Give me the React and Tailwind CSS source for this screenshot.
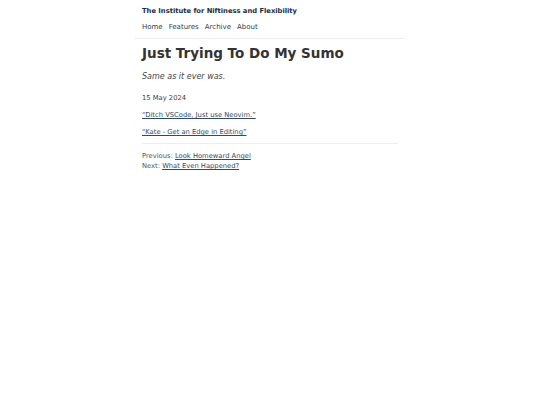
export default function App() {
  return (
    <div
      className="min-h-screen bg-white text-[#333]"
      style={{ fontFamily: '"DejaVu Sans", sans-serif' }}
    >
      <div className="mx-auto w-[270px] pt-[6px]">
        <header className="border-b border-[#eee] px-[7px] pb-[6px]">
          <a href="#" className="block text-[6.75px] font-bold leading-[10px] text-[#1c2b44]">
            The Institute for Niftiness and Flexibility
          </a>
          <nav className="mt-[6px] flex gap-[6px] text-[7px] leading-[10px] text-[#2c3e5a]">
            <a href="#">Home</a>
            <a href="#">Features</a>
            <a href="#">Archive</a>
            <a href="#">About</a>
          </nav>
        </header>
        <article className="px-[7px] pt-[5px]">
          <h1 className="text-[13.5px] font-bold leading-[18px] text-[#333]">
            Just Trying To Do My Sumo
          </h1>
          <p className="mt-[10px] text-[8px] italic leading-[10px] text-[#444]">
            Same as it ever was.
          </p>
          <p className="mt-[11px] text-[6.75px] leading-[10px] text-[#444]">15 May 2024</p>
          <p className="mt-[7px] text-[6.75px] leading-[10px]">
            <a href="#" className="text-[#2c4a6e] underline">“Ditch VSCode, Just use Neovim.”</a>
          </p>
          <p className="mt-[7px] text-[6.75px] leading-[10px]">
            <a href="#" className="text-[#2c4a6e] underline">“Kate - Get an Edge in Editing”</a>
          </p>
          <div className="mt-[6px] border-t border-[#eee] pt-[7px] text-[6.75px] leading-[10px] text-[#555]">
            <div>
              Previous: <a href="#" className="text-[#2c4a6e] underline">Look Homeward Angel</a>
            </div>
            <div>
              Next: <a href="#" className="text-[#2c4a6e] underline">What Even Happened?</a>
            </div>
          </div>
        </article>
      </div>
    </div>
  );
}
